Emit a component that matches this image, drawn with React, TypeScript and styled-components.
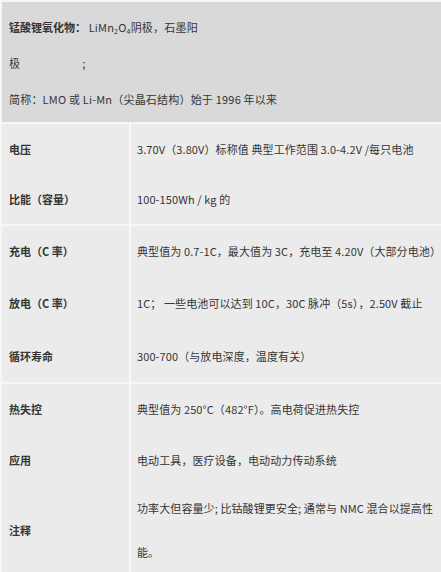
import styled, { createGlobalStyle } from 'styled-components'

const GlobalStyle = createGlobalStyle`
  html, body {
    margin: 0;
    padding: 0;
    background: #f6f6f6;
  }
  body {
    font-family: "Noto Sans CJK SC", "Noto Sans", "Liberation Sans", sans-serif;
    color: #353535;
    font-size: 11px;
  }
`

interface Row {
  label: string
  value: string[]
  height: number
}

const groups: Row[][] = [
  [
    { label: '电压', value: ['3.70V（3.80V）标称值 典型工作范围 3.0-4.2V /每只电池'], height: 50 },
    { label: '比能（容量）', value: ['100-150Wh / kg 的'], height: 50 }
  ],
  [
    { label: '充电（C 率）', value: ['典型值为 0.7-1C，最大值为 3C，充电至 4.20V（大部分电池）'], height: 50 },
    { label: '放电（C 率）', value: ['1C； 一些电池可以达到 10C，30C 脉冲（5s），2.50V 截止'], height: 54 },
    { label: '循环寿命', value: ['300-700（与放电深度，温度有关）'], height: 52 }
  ],
  [
    { label: '热失控', value: ['典型值为 250°C（482°F）。高电荷促进热失控'], height: 50 },
    { label: '应用', value: ['电动工具，医疗设备，电动动力传动系统'], height: 52 },
    { label: '注释', value: ['功率大但容量少; 比钴酸锂更安全; 通常与 NMC 混合以提高性', '能。'], height: 86 }
  ]
]

export default function App() {
  return (
    <>
      <GlobalStyle />
      <Page>
        <Header>
          <HeaderLine>
            <Strong>锰酸锂氧化物：</Strong> LiMn<Sub>2</Sub>O<Sub>4</Sub>阴极，石墨阳
          </HeaderLine>
          <HeaderLine>
            极<Gap $width={62} />;
          </HeaderLine>
          <HeaderLine>简称：LMO 或 Li-Mn（尖晶石结构）始于 1996 年以来</HeaderLine>
        </Header>
        {groups.map((rows, i) => (
          <Group key={i}>
            {rows.map((row) => (
              <RowBox key={row.label} $height={row.height}>
                <LabelCell>{row.label}</LabelCell>
                <ValueCell>
                  {row.value.map((line) => (
                    <ValueLine key={line}>{line}</ValueLine>
                  ))}
                </ValueCell>
              </RowBox>
            ))}
          </Group>
        ))}
      </Page>
    </>
  )
}

const Page = styled.div`
  width: 441px;
  height: 572px;
  box-sizing: border-box;
  padding: 2px 0 0 2px;
  display: flex;
  flex-direction: column;
  gap: 2px;
  overflow: hidden;
`

const Header = styled.div`
  background: #d9d9d9;
  padding: 7px 8px 5px 7px;
  height: 120px;
  box-sizing: border-box;
  letter-spacing: 0.2px;
`

const HeaderLine = styled.div`
  height: 36px;
  line-height: 36px;
  white-space: nowrap;
`

const Strong = styled.span`
  font-weight: 700;
  letter-spacing: 0;
`

const Sub = styled.span`
  font-size: 7px;
  vertical-align: -2px;
`

const Gap = styled.span<{ $width: number }>`
  display: inline-block;
  width: ${({ $width }) => $width}px;
`

const Group = styled.div`
  display: flex;
  flex-direction: column;
`

const RowBox = styled.div<{ $height: number }>`
  display: grid;
  grid-template-columns: 127px 1fr;
  column-gap: 2px;
  height: ${({ $height }) => $height}px;
  background: #f8f8f8;
`

const LabelCell = styled.div`
  background: #ebebeb;
  display: flex;
  align-items: center;
  padding-left: 7px;
  font-weight: 700;
  white-space: nowrap;
`

const ValueCell = styled.div`
  background: #ebebeb;
  display: flex;
  flex-direction: column;
  justify-content: center;
  padding-left: 6px;
  letter-spacing: 0.1px;
`

const ValueLine = styled.div`
  line-height: 44px;
  white-space: nowrap;
`
